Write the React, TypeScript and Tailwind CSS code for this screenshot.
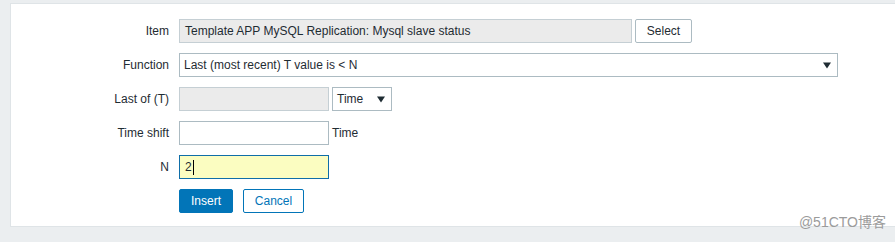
import React from "react";

function Arrow() {
  return (
    <svg width="8" height="7" viewBox="0 0 8 7" className="shrink-0">
      <path d="M0 0.5 L8 0.5 L4 6.5 Z" fill="#1f2c33" />
    </svg>
  );
}

function Label({ children }: { children: React.ReactNode }) {
  return (
    <div className="flex h-[24px] items-center justify-end text-[12px] text-[#1f2c33]">
      {children}
    </div>
  );
}

export default function App() {
  return (
    <div
      className="relative h-[242px] w-full overflow-hidden bg-[#ebeef0] pl-[10px] pt-[3px]"
      style={{ fontFamily: '"Liberation Sans", Arial, sans-serif' }}
    >
      <div className="h-[224px] border border-r-0 border-[#dfe4e7] bg-white pt-[15px]">
        <div className="grid grid-cols-[158px_1fr] gap-x-[10px] gap-y-[10px]">
          <Label>Item</Label>
          <div className="flex h-[24px] gap-[3px]">
            <div className="flex w-[453px] items-center border border-[#c5cfd4] bg-[#ebebeb] px-[5px] text-[12px] text-[#1f2c33]">
              Template APP MySQL Replication: Mysql slave status
            </div>
            <button className="flex w-[57px] items-center justify-center rounded-[2px] border border-[#acbbc2] bg-white text-[12px] text-[#1f2c33]">
              Select
            </button>
          </div>

          <Label>Function</Label>
          <div className="flex h-[24px] w-[659px] items-center justify-between border border-[#acbbc2] bg-white pl-[4px] pr-[6px] text-[12px] text-[#1f2c33]">
            <span>Last (most recent) T value is &lt; N</span>
            <Arrow />
          </div>

          <Label>Last of (T)</Label>
          <div className="flex h-[24px] gap-[3px]">
            <div className="w-[150px] border border-[#c5cfd4] bg-[#ebebeb]" />
            <div className="flex w-[60px] items-center justify-between border border-[#acbbc2] bg-white pl-[4px] pr-[6px] text-[12px] text-[#1f2c33]">
              <span>Time</span>
              <Arrow />
            </div>
          </div>

          <Label>Time shift</Label>
          <div className="flex h-[24px] items-center gap-[3px]">
            <div className="h-full w-[150px] border border-[#acbbc2] bg-white" />
            <span className="text-[12px] text-[#1f2c33]">Time</span>
          </div>

          <Label>N</Label>
          <div className="flex h-[24px] w-[150px] items-center border border-[#0f6ea8] bg-[#fbfdc1] px-[5px] text-[12px] text-[#1f2c33]">
            <span>2</span>
            <span className="ml-px h-[15px] w-px bg-black" />
          </div>

          <div />
          <div className="flex h-[24px] gap-[10px]">
            <button className="flex w-[54px] items-center justify-center rounded-[2px] border border-[#0275b8] bg-[#0275b8] text-[12px] text-white">
              Insert
            </button>
            <button className="flex w-[61px] items-center justify-center rounded-[2px] border border-[#0275b8] bg-white text-[12px] text-[#0275b8]">
              Cancel
            </button>
          </div>
        </div>
      </div>
      <div
        className="absolute bottom-[9px] right-[9px] text-[14px] text-[#9b9b9b]"
        style={{ fontFamily: '"Liberation Sans", "Noto Sans CJK SC", sans-serif' }}
      >
        @51CTO博客
      </div>
    </div>
  );
}
